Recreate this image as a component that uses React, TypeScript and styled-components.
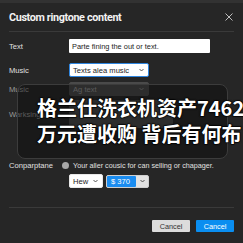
import React from "react";
import styled, { createGlobalStyle } from "styled-components";

const Global = createGlobalStyle`
  html, body { margin: 0; padding: 0; background: #262626; overflow: hidden; }
  body { font-family: "Liberation Sans", Arial, sans-serif; }
`;

const Dialog = styled.div`
  position: relative;
  width: 243px;
  height: 243px;
  box-sizing: border-box;
  background: #262626;
  border-top: 3px solid #323232;
  padding: 0 9px 0 9px;
  display: flex;
  flex-direction: column;
  overflow: hidden;
  color: #e6e6e6;
`;

const Header = styled.div`
  height: 28px;
  display: flex;
  align-items: center;
  justify-content: space-between;
`;

const Title = styled.div`
  font-family: Roboto, "Open Sans", sans-serif;
  font-weight: 700;
  font-size: 10.8px;
  letter-spacing: -0.35px;
  color: #f2f2f2;
`;

const Close = styled.svg`
  width: 8px;
  height: 8px;
  margin-right: 1px;
`;

const Divider = styled.div<{ $mt?: number }>`
  height: 1px;
  background: #3a3a3a;
  margin-top: ${(p) => p.$mt ?? 0}px;
`;

const Row = styled.div<{ $mt: number }>`
  display: flex;
  align-items: center;
  margin-top: ${(p) => p.$mt}px;
`;

const Label = styled.div<{ $dim?: boolean }>`
  width: 60px;
  flex: none;
  font-size: 7.6px;
  color: ${(p) => (p.$dim ? "#9a9a9a" : "#e0e0e0")};
`;

const Input = styled.div`
  width: 141px;
  height: 14px;
  box-sizing: border-box;
  background: #fff;
  border-radius: 1px;
  font-size: 7.4px;
  color: #222;
  padding-left: 3px;
  display: flex;
  align-items: center;
`;

const Select = styled.div<{ $w: number; $focus?: boolean; $dim?: boolean }>`
  width: ${(p) => p.$w}px;
  height: 14px;
  box-sizing: border-box;
  background: ${(p) => (p.$dim ? "#4a4a4a" : "#fff")};
  border: 1px solid ${(p) => (p.$focus ? "#2f86e0" : p.$dim ? "#4a4a4a" : "#e8e8e8")};
  border-radius: 2px;
  font-size: 7.6px;
  color: ${(p) => (p.$dim ? "#9a9a9a" : "#222")};
  padding: 0 4px 0 3px;
  display: flex;
  align-items: center;
  justify-content: space-between;
`;

const Chevron = styled.svg`
  width: 5px;
  height: 4px;
  flex: none;
`;

const Area = styled.div`
  width: 104px;
  height: 28px;
  background: #4a4a4a;
  border-radius: 2px;
`;

const Radio = styled.span`
  width: 7px;
  height: 7px;
  border-radius: 50%;
  background: #a8a8a8;
  margin: 0 4px 0 -7px;
  flex: none;
`;

const Hint = styled.span`
  font-size: 7.2px;
  color: #e0e0e0;
  white-space: nowrap;
`;

const Combo = styled.div`
  margin-left: 3px;
  width: 43px;
  height: 13px;
  box-sizing: border-box;
  border: 1px solid #cfcfcf;
  border-radius: 2px;
  background: #e2e2e2;
  display: flex;
  align-items: stretch;
`;

const ComboValue = styled.div`
  width: 29px;
  background: #1a8cf0;
  color: #fff;
  font-size: 7.6px;
  display: flex;
  align-items: center;
  padding-left: 4px;
  box-sizing: border-box;
  border-radius: 1px;
`;

const ComboArrow = styled.div`
  flex: 1;
  display: flex;
  align-items: center;
  justify-content: center;
`;

const Footer = styled.div`
  display: flex;
  justify-content: flex-end;
  gap: 6px;
  margin-top: 12px;
`;

const Button = styled.div<{ $primary?: boolean }>`
  width: 38px;
  height: 12px;
  border-radius: 1px;
  font-size: 7.3px;
  display: flex;
  align-items: center;
  justify-content: center;
  background: ${(p) => (p.$primary ? "#0a8ef0" : "#dcdcdc")};
  color: ${(p) => (p.$primary ? "#fff" : "#333")};
`;

const Overlay = styled.div`
  position: absolute;
  left: 17px;
  top: 81px;
  width: 211px;
  height: 75px;
  box-sizing: border-box;
  border: 1px solid #3c3c3c;
  border-radius: 8px;
  background: rgba(10, 10, 10, 0.45);
  padding: 10px 0 0 19px;
`;

const Caption = styled.div`
  font-family: "Noto Sans CJK SC", sans-serif;
  font-weight: 700;
  font-size: 20px;
  line-height: 26px;
  color: #fff;
  white-space: nowrap;
  -webkit-text-stroke: 1px #000;
  paint-order: stroke fill;
  text-shadow: 0 0 2px #000, 0 0 2px #000;
`;

const Down = ({ color = "#444" }: { color?: string }) => (
  <Chevron viewBox="0 0 5 4">
    <polyline points="0.5,1 2.5,3 4.5,1" fill="none" stroke={color} strokeWidth="0.9" />
  </Chevron>
);

export default function App() {
  return (
    <>
      <Global />
      <Dialog>
        <Header>
          <Title>Custom ringtone content</Title>
          <Close viewBox="0 0 8 8">
            <path d="M0.5 0.5 L7.5 7.5 M7.5 0.5 L0.5 7.5" stroke="#cfcfcf" strokeWidth="0.9" />
          </Close>
        </Header>
        <Divider />
        <Row $mt={7}>
          <Label>Text</Label>
          <Input>Parte fining the out or text.</Input>
        </Row>
        <Row $mt={10}>
          <Label>Music</Label>
          <Select $w={80} $focus>
            <span>Texts alea music</span>
            <Down />
          </Select>
        </Row>
        <Row $mt={5}>
          <Label $dim>Music</Label>
          <Select $w={80} $dim>
            <span>Ag text</span>
            <Down color="#8a8a8a" />
          </Select>
        </Row>
        <Row $mt={4}>
          <Label $dim>Warksinga</Label>
          <Area />
        </Row>
        <Row $mt={33}>
          <Label>Conparptane</Label>
          <Radio />
          <Hint>Your aller cousic for can selling or chapager.</Hint>
        </Row>
        <Row $mt={4}>
          <Label />
          <Select $w={34}>
            <span>Hew</span>
            <Down />
          </Select>
          <Combo>
            <ComboValue>$ 370</ComboValue>
            <ComboArrow>
              <Down />
            </ComboArrow>
          </Combo>
        </Row>
        <Divider $mt={19} />
        <Footer>
          <Button>Cancel</Button>
          <Button $primary>Cancel</Button>
        </Footer>
        <Overlay>
          <Caption>格兰仕洗衣机资产7462</Caption>
          <Caption>万元遭收购 背后有何布</Caption>
        </Overlay>
      </Dialog>
    </>
  );
}
